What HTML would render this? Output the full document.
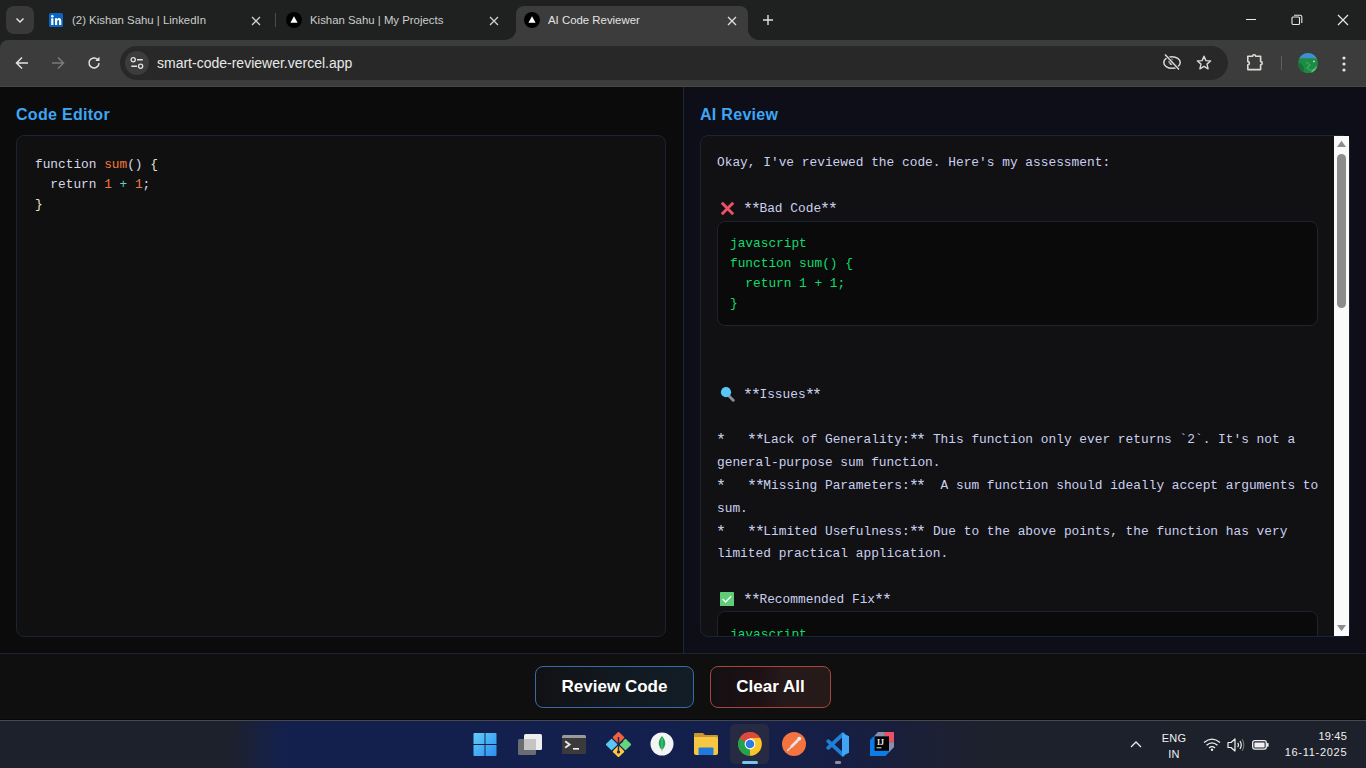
<!DOCTYPE html>
<html><head><meta charset="utf-8">
<style>
*{margin:0;padding:0;box-sizing:border-box}
html,body{width:1366px;height:768px;overflow:hidden;background:#0b0b0b;font-family:"Liberation Sans",sans-serif}
.abs{position:absolute}
#tabstrip{position:absolute;left:0;top:0;width:1366px;height:40px;background:#1f2120}
#tsbg{position:absolute;left:0;top:30px;width:20px;height:20px;background:#1f2120}
#toolbar{position:absolute;left:0;top:40px;width:1366px;height:47px;background:#3c3c3c;border-top-left-radius:8px;border-bottom:1px solid #474747}
.tabtitle{position:absolute;top:14px;font-size:11.4px;color:#e3e3e3;white-space:nowrap}
.mono{font-family:"Liberation Mono",monospace}
#page{position:absolute;left:0;top:87px;width:1366px;height:633px}
#left{position:absolute;left:0;top:0;width:683px;height:566px;background:#0b0b0b}
#right{position:absolute;left:683px;top:0;width:683px;height:566px;background:#0d0e17;border-left:1px solid #1b2838}
.ptitle{position:absolute;top:19.4px;font-size:16px;font-weight:bold;color:#3ea6f5;letter-spacing:0.3px}
#editor{position:absolute;left:16px;top:48px;width:650px;height:502px;background:#101010;border:1px solid #1b2432;border-radius:8px}
#review{position:absolute;left:16px;top:48px;width:650px;height:502px;background:#111114;border:1px solid #1b2432;border-radius:8px;overflow:hidden}
#bottom{position:absolute;left:0;top:566px;width:1366px;height:67px;background:#0f0f0f;border-top:1px solid #1b2432}
.btn{position:absolute;top:12px;height:42px;border-radius:8px;color:#fff;font-weight:bold;font-size:17px;text-align:center;line-height:40px}
#taskbar{position:absolute;left:0;top:720px;width:1366px;height:48px;background:linear-gradient(90deg,#1d212b 0,#1d212b 227px,#13204e 286px,#13204e 640px,#161e44 840px,#1b2034 935px,#1d212b 1000px,#1d212b 100%);border-top:1px solid #46484e}
.cblock{position:absolute;left:16px;width:601px;background:#0a0a0a;border:1px solid #1b2432;border-radius:8px}
.cl{position:absolute;left:12px;white-space:pre;font-family:"Liberation Mono",monospace;font-size:12.8px;line-height:20px;color:#10dc6c}
.line i{font-style:normal;display:inline-block;transform:scale(1.28,1.22) translateY(0.6px)}
.line{position:absolute;left:0;white-space:pre;font-family:"Liberation Mono",monospace;font-size:12.85px;color:#cbd0ee}
</style></head><body>

<div id="tsbg"></div>
<div id="tabstrip">
  <div class="abs" style="left:6px;top:6px;width:28px;height:28px;border-radius:8px;background:#393939"></div>
  <svg class="abs" style="left:14px;top:14px" width="12" height="12" viewBox="0 0 12 12"><path d="M2.5 4.5 L6 8 L9.5 4.5" stroke="#e8e8e8" stroke-width="1.4" fill="none"/></svg>
  <!-- tab 1 -->
  <svg class="abs" style="left:49px;top:13px" width="14" height="14" viewBox="0 0 14 14"><rect width="14" height="14" rx="1.5" fill="#0a66c2"/><rect x="2.2" y="5.3" width="2.2" height="6.7" fill="#fff"/><circle cx="3.3" cy="3.2" r="1.3" fill="#fff"/><path d="M6 12V5.3H8.1V6.3Q8.8 5.1 10.3 5.1Q12.3 5.1 12.3 7.7V12H10.1V8.2Q10.1 6.9 9.2 6.9Q8.2 6.9 8.2 8.3V12Z" fill="#fff"/></svg>
  <div class="tabtitle" style="left:72px;color:#cdcdcd">(2) Kishan Sahu | LinkedIn</div>
  <svg class="abs" style="left:251px;top:16px" width="10" height="10" viewBox="0 0 10 10"><path d="M1 1L9 9M9 1L1 9" stroke="#d0d0d0" stroke-width="1.3"/></svg>
  <div class="abs" style="left:275px;top:13px;width:1px;height:14px;background:#4a4a4a"></div>
  <!-- tab 2 -->
  <svg class="abs" style="left:286px;top:12px" width="16" height="16" viewBox="0 0 16 16"><circle cx="8" cy="8" r="8" fill="#000"/><path d="M8 4.3L11.6 10.8H4.4Z" fill="#fff"/></svg>
  <div class="tabtitle" style="left:310px;color:#cdcdcd">Kishan Sahu | My Projects</div>
  <svg class="abs" style="left:489px;top:16px" width="10" height="10" viewBox="0 0 10 10"><path d="M1 1L9 9M9 1L1 9" stroke="#d0d0d0" stroke-width="1.3"/></svg>
  <!-- active tab -->
  <svg class="abs" style="left:500px;top:6px" width="266" height="35" viewBox="0 0 266 35"><path d="M5 35 V34 A11 11 0 0 0 16 23 V8 A8 8 0 0 1 24 0 H240 A8 8 0 0 1 248 8 V23 A11 11 0 0 0 259 34 V35Z" fill="#3c3c3c"/></svg>
  <svg class="abs" style="left:524px;top:12px" width="16" height="16" viewBox="0 0 16 16"><circle cx="8" cy="8" r="8" fill="#000"/><path d="M8 4.3L11.6 10.8H4.4Z" fill="#fff"/></svg>
  <div class="tabtitle" style="left:548px">AI Code Reviewer</div>
  <svg class="abs" style="left:727px;top:16px" width="10" height="10" viewBox="0 0 10 10"><path d="M1 1L9 9M9 1L1 9" stroke="#e0e0e0" stroke-width="1.3"/></svg>
  <svg class="abs" style="left:762px;top:14px" width="12" height="12" viewBox="0 0 12 12"><path d="M6 1V11M1 6H11" stroke="#e0e0e0" stroke-width="1.4"/></svg>
  <!-- window controls -->
  <div class="abs" style="left:1246px;top:19px;width:10px;height:1px;background:#e8e8e8"></div>
  <svg class="abs" style="left:1291px;top:14px" width="12" height="12" viewBox="0 0 12 12"><rect x="1" y="3" width="7.5" height="7.5" rx="1" stroke="#e8e8e8" fill="none" stroke-width="1.1"/><path d="M3 1.2H9.3Q10.8 1.2 10.8 2.7V9" stroke="#e8e8e8" fill="none" stroke-width="1.1"/></svg>
  <svg class="abs" style="left:1337px;top:14px" width="12" height="12" viewBox="0 0 12 12"><path d="M1 1L11 11M11 1L1 11" stroke="#e8e8e8" stroke-width="1.2"/></svg>
</div>

<div id="toolbar">
  <svg class="abs" style="left:15px;top:16px" width="14" height="14" viewBox="0 0 14 14"><path d="M13 7H2M7 1.5L1.5 7L7 12.5" stroke="#e3e3e3" stroke-width="1.5" fill="none"/></svg>
  <svg class="abs" style="left:51px;top:16px" width="14" height="14" viewBox="0 0 14 14"><path d="M1 7H12M7 1.5L12.5 7L7 12.5" stroke="#7a7a7a" stroke-width="1.5" fill="none"/></svg>
  <svg class="abs" style="left:87px;top:16px" width="14" height="14" viewBox="0 0 14 14"><path d="M12 7A5 5 0 1 1 10.5 3.4" stroke="#e3e3e3" stroke-width="1.5" fill="none"/><path d="M12.5 0.8V5H8.3Z" fill="#e3e3e3"/></svg>
  <div class="abs" style="left:120px;top:6px;width:1108px;height:34px;border-radius:17px;background:#282828"></div>
  <div class="abs" style="left:125px;top:11px;width:24px;height:24px;border-radius:12px;background:#3c3c3c"></div>
  <svg class="abs" style="left:128px;top:14px" width="18" height="18" viewBox="0 0 18 18"><circle cx="5.2" cy="5.7" r="2.1" stroke="#e3e3e3" fill="none" stroke-width="1.3"/><path d="M9 5.7H14.8M3.3 12.2H9" stroke="#e3e3e3" stroke-width="1.5"/><circle cx="12.6" cy="12.2" r="2.1" stroke="#e3e3e3" fill="none" stroke-width="1.3"/></svg>
  <div class="abs" style="left:157px;top:15px;font-size:14px;color:#e8e8e8">smart-code-reviewer.vercel.app</div>
  <svg class="abs" style="left:1162px;top:13.3px" width="20" height="18" viewBox="0 0 20 18"><ellipse cx="10" cy="9.5" rx="8.2" ry="5.8" stroke="#d8d8d8" stroke-width="1.5" fill="none"/><path d="M7 9.5A3 3 0 0 1 10.5 6.6" stroke="#d8d8d8" stroke-width="1.6" fill="none"/><circle cx="9.3" cy="10" r="2" fill="#d8d8d8"/><path d="M3 1.5L17 16.5" stroke="#282828" stroke-width="3"/><path d="M3 1.5L17 16.5" stroke="#d8d8d8" stroke-width="1.5"/></svg>
  <svg class="abs" style="left:1196px;top:15px" width="16" height="16" viewBox="0 0 16 16"><path d="M8 1.2L9.9 5.6L14.6 6L11 9.1L12.1 13.8L8 11.3L3.9 13.8L5 9.1L1.4 6L6.1 5.6Z" stroke="#d8d8d8" stroke-width="1.4" fill="none" stroke-linejoin="round"/></svg>
  <svg class="abs" style="left:1245px;top:13px" width="20" height="19" viewBox="0 0 20 19"><path d="M2.8 3.2H7.6A1.5 1.5 0 0 1 10.6 3.2H15.6V8.6A1.6 1.6 0 0 1 15.6 11.8V16.6H2.8V11.8A1.6 1.6 0 0 0 2.8 8.6Z" stroke="#dcdcd6" stroke-width="1.6" fill="none" stroke-linejoin="round"/></svg>
  <div class="abs" style="left:1280.5px;top:16px;width:1.2px;height:14px;background:#5d606c"></div>
  <svg class="abs" style="left:1298px;top:13px" width="20" height="20" viewBox="0 0 20 20"><defs><clipPath id="av"><circle cx="10" cy="10.1" r="10"/></clipPath></defs><g clip-path="url(#av)"><rect width="20" height="20" fill="#1f8a45"/><rect width="20" height="5.2" fill="#3f8fd6"/><path d="M0 6Q6 4 10 5.5Q15 4 20 6.5V5H0Z" fill="#2a9a50"/><path d="M0 9Q5 11 6 16Q7 20 0 20Z" fill="#167038"/><path d="M8 9L12 12L9 15L14 18" stroke="#2fae5c" stroke-width="1.2" fill="none"/><circle cx="16" cy="8.3" r="0.9" fill="#e8e0ea"/><path d="M14 17Q17 15 19 13V20H13Z" fill="#4cc36e"/></g></svg>
  <svg class="abs" style="left:1341px;top:16px" width="6" height="16" viewBox="0 0 6 16"><circle cx="3" cy="2" r="1.6" fill="#e3e3e3"/><circle cx="3" cy="8" r="1.6" fill="#e3e3e3"/><circle cx="3" cy="14" r="1.6" fill="#e3e3e3"/></svg>
</div>

<div id="page">
  <div id="left">
    <div class="ptitle" style="left:16px">Code Editor</div>
    <div id="editor">
      <div class="mono" style="position:absolute;left:18px;top:19px;font-size:12.8px;line-height:20px;color:#d6d8ea;white-space:pre">function <span style="color:#f2793f">sum</span>() <span style="color:#ece4c8">{</span>
  return <span style="color:#f2793f">1</span> <span style="color:#67cdcc">+</span> <span style="color:#f2793f">1</span>;
<span style="color:#ece4c8">}</span></div>
    </div>
  </div>
  <div id="right">
    <div class="ptitle" style="left:16px">AI Review</div>
    <div id="review">
      <div class="line" style="top:19.3px;left:16px">Okay, I've reviewed the code. Here's my assessment:</div>
      <svg class="abs" style="left:18.5px;top:64.5px" width="15" height="15" viewBox="0 0 15 15"><path d="M1.8 1.8L13.2 13.2M13.2 1.8L1.8 13.2" stroke="#f05068" stroke-width="2.9" stroke-linecap="butt"/></svg>
      <div class="line" style="top:65.0px;left:43px"><i>*</i><i>*</i>Bad Code<i>*</i><i>*</i></div>
      <div class="cblock" style="top:85px;height:105px"><div class="cl" style="top:12.2px">javascript
function sum() {
  return 1 + 1;
}</div></div>
      <svg class="abs" style="left:18px;top:250px" width="16" height="16" viewBox="0 0 16 16"><path d="M9.8 9.8L14.2 14.2" stroke="#8a8d9a" stroke-width="3" stroke-linecap="round"/><circle cx="7" cy="6.2" r="5.1" fill="#58c6f6"/></svg>
      <div class="line" style="top:251.0px;left:43px"><i>*</i><i>*</i>Issues<i>*</i><i>*</i></div>
      <div class="line" style="top:296.2px;left:16px"><i>*</i>   <i>*</i><i>*</i>Lack of Generality:<i>*</i><i>*</i> This function only ever returns `2`. It's not a</div>
      <div class="line" style="top:319.1px;left:16px">general-purpose sum function.</div>
      <div class="line" style="top:342.0px;left:16px"><i>*</i>   <i>*</i><i>*</i>Missing Parameters:<i>*</i><i>*</i>  A sum function should ideally accept arguments to</div>
      <div class="line" style="top:364.8px;left:16px">sum.</div>
      <div class="line" style="top:387.6px;left:16px"><i>*</i>   <i>*</i><i>*</i>Limited Usefulness:<i>*</i><i>*</i> Due to the above points, the function has very</div>
      <div class="line" style="top:410.4px;left:16px">limited practical application.</div>
      <svg class="abs" style="left:19px;top:456px" width="14" height="14" viewBox="0 0 14 14"><rect x="0" y="0" width="14" height="14" rx="0.6" fill="#60cc78"/><path d="M2.6 7L5.6 10L11.2 4.2" stroke="#fff" stroke-width="1.3" fill="none"/></svg>
      <div class="line" style="top:456.0px;left:43px"><i>*</i><i>*</i>Recommended Fix<i>*</i><i>*</i></div>
      <div class="cblock" style="top:475.4px;height:60px"><div class="cl" style="top:12.2px">javascript</div></div>
    </div>
    <div class="abs" style="left:650px;top:48.5px;width:15px;height:500.5px;background:#fafafa"></div>
    <svg class="abs" style="left:652px;top:53px" width="11" height="8" viewBox="0 0 11 8"><path d="M5.5 0.8L10 7H1Z" fill="#8c8c8c"/></svg>
    <div class="abs" style="left:653px;top:67px;width:9px;height:154px;border-radius:4.5px;background:#8c8c8c"></div>
    <svg class="abs" style="left:652px;top:537px" width="11" height="8" viewBox="0 0 11 8"><path d="M1 1H10L5.5 7.2Z" fill="#8c8c8c"/></svg>
  </div>
  <div id="bottom">
    <div class="btn" style="left:535px;width:159px;border:1px solid #3a6aa6;background:linear-gradient(90deg,#111114 0%,#121a21 55%,#121d25 100%)">Review Code</div>
    <div class="btn" style="left:710px;width:121px;border:1px solid #a3463f;background:linear-gradient(90deg,#131013 0%,#1e1114 40%,#25191a 60%,#261a19 100%)">Clear All</div>
  </div>
</div>

<div class="abs" style="left:0;top:719px;width:1366px;height:1px;background:#070707"></div>
<div id="taskbar">
  <!-- start -->
  <svg class="abs" style="left:473px;top:12px" width="24" height="23" viewBox="0 0 24 24"><defs><linearGradient id="ws" x1="0" y1="0" x2="1" y2="1"><stop offset="0" stop-color="#62cdf7"/><stop offset="1" stop-color="#2a8ff0"/></linearGradient></defs><path d="M0 1Q0 0 1 0H11.5V11.5H0ZM12.5 0H23Q24 0 24 1V11.5H12.5ZM0 12.5H11.5V24H1Q0 24 0 23ZM12.5 12.5H24V23Q24 24 23 24H12.5Z" fill="url(#ws)"/></svg>
  <!-- task view -->
  <svg class="abs" style="left:518px;top:12px" width="25" height="23" viewBox="0 0 25 23"><rect x="0" y="6" width="18" height="16" rx="1.5" fill="#6a6c72"/><rect x="6" y="1" width="18" height="16" rx="1.5" fill="#eeeeee"/><rect x="6" y="6" width="12" height="11" fill="#c4c4c2"/></svg>
  <!-- terminal -->
  <svg class="abs" style="left:562px;top:14px" width="24" height="19" viewBox="0 0 24 19"><rect x="0" y="0" width="24" height="19" rx="1.5" fill="#3a3a3a"/><path d="M1.5 0H22.5Q24 0 24 1.5V3H0V1.5Q0 0 1.5 0Z" fill="#9a9a9a"/><path d="M3.2 6.3L7.5 9.5L3.2 12.7" stroke="#e6e6e6" stroke-width="2" fill="none"/><rect x="11" y="13" width="6" height="1.6" fill="#f2f2f2"/></svg>
  <!-- git diamond -->
  <svg class="abs" style="left:606px;top:11px" width="25" height="25" viewBox="0 0 25 25"><g transform="rotate(45 12.5 12.5)"><rect x="3.3" y="3.3" width="8.6" height="8.6" rx="1" fill="#f0613c"/><rect x="13.1" y="3.3" width="8.6" height="8.6" rx="1" fill="#66d47a"/><rect x="3.3" y="13.1" width="8.6" height="8.6" rx="1" fill="#5cc6f4"/><rect x="13.1" y="13.1" width="8.6" height="8.6" rx="1" fill="#fcc63e"/></g><path d="M12.5 5V20M12.5 12.5L17 9" stroke="#1b2a55" stroke-width="1.5"/><circle cx="12.5" cy="20" r="1.6" fill="#1b2a55"/></svg>
  <!-- mongodb -->
  <svg class="abs" style="left:650px;top:11px" width="24" height="24" viewBox="0 0 24 24"><circle cx="12" cy="12" r="11.5" fill="#f4f4f4"/><path d="M12 4Q16 8.5 15.2 12.5Q14.5 16 12.3 17.5L12 20L11.7 17.5Q9.5 16 8.8 12.5Q8 8.5 12 4Z" fill="#13aa52"/><path d="M12 6V19" stroke="#b8c4bb" stroke-width="0.6"/></svg>
  <!-- files -->
  <svg class="abs" style="left:694px;top:12px" width="24" height="22" viewBox="0 0 24 22"><path d="M0 1Q0 0 1 0H9L11 2H23Q24 2 24 3V6H0Z" fill="#c9972e"/><path d="M0 4H22Q24 4 24 6V20Q24 22 22 22H2Q0 22 0 20Z" fill="#f7c744"/><rect x="4.5" y="14.5" width="15" height="7.5" rx="1" fill="#1f7ad8"/></svg>
  <!-- chrome (active) -->
  <div class="abs" style="left:730px;top:3px;width:39px;height:40px;border-radius:5px;background:#262b42"></div>
  <svg class="abs" style="left:738px;top:11px" width="24" height="24" viewBox="0 0 24 24"><circle cx="12" cy="12" r="11.8" fill="#dd4a3b"/><path d="M12 12L1.6 6.2A11.8 11.8 0 0 0 12 23.8Z" fill="#26a24a"/><path d="M12 12L12 23.8A11.8 11.8 0 0 0 22.2 6.1L12 6.1Z" fill="#f8c626"/><path d="M12 12L1.6 6.2 A11.8 11.8 0 0 1 22.2 6.1L12 6.1Z" fill="#dd4a3b"/><circle cx="12" cy="12" r="5.4" fill="#fff"/><circle cx="12" cy="12" r="4.3" fill="#2d7be5"/></svg>
  <div class="abs" style="left:742px;top:40px;width:16px;height:3px;border-radius:1.5px;background:#76c6f2"></div>
  <!-- postman -->
  <svg class="abs" style="left:782px;top:11px" width="24" height="24" viewBox="0 0 24 24"><circle cx="12" cy="12" r="12" fill="#f4733f"/><path d="M5.5 18.6L10.5 14" stroke="#e8e8e8" stroke-width="1.3" stroke-linecap="round"/><path d="M9.8 14.2L15.6 8.6" stroke="#e4e4e4" stroke-width="2.8" stroke-linecap="round"/><circle cx="17.3" cy="6.6" r="1.9" fill="#f2f2f2"/></svg>
  <!-- vscode -->
  <svg class="abs" style="left:825px;top:11px" width="25" height="25" viewBox="0 0 25 25"><path d="M18 2.2L3.2 15.8M18 22.8L3.2 9.2" stroke="#1f7fd6" stroke-width="3.8" stroke-linecap="round"/><path d="M17 0.8L24 4.2V20.8L17 24.2Z" fill="#3fa5f4"/></svg>
  <div class="abs" style="left:835px;top:40px;width:6px;height:2.5px;border-radius:1.2px;background:#8a8f9e"></div>
  <!-- intellij -->
  <svg class="abs" style="left:870px;top:11px" width="24" height="24" viewBox="0 0 24 24"><path d="M0 8L8 0H24V15L15.5 24H0Z" fill="#0b7de8"/><path d="M8 0H14.5V4.5H4.5Z" fill="#8b90a8"/><path d="M14.5 0H24V10.5H19V4.5H14.5Z" fill="#ec5068"/><path d="M19 10.5H24V15L19 20Z" fill="#8b90a8"/><rect x="4.6" y="4.4" width="14.4" height="14.4" fill="#000"/><text x="7" y="12.8" font-family="Liberation Serif" font-size="8" font-weight="bold" fill="#f0f0f0">IJ</text><rect x="6.5" y="15.3" width="5" height="1" fill="#e6e6e6"/></svg>
  <!-- tray -->
  <svg class="abs" style="left:1130px;top:18.5px" width="12" height="8" viewBox="0 0 12 8"><path d="M1 7L6 2L11 7" stroke="#eaeaea" stroke-width="1.3" fill="none"/></svg>
  <div class="abs" style="left:1159px;top:9px;width:30px;text-align:center;font-size:11px;line-height:16px;color:#f0f0f0;letter-spacing:0.2px">ENG<br>IN</div>
  <svg class="abs" style="left:1203px;top:17px" width="18" height="13" viewBox="0 0 18 13"><path d="M1 4.6Q9 -2.2 17 4.6M3.5 7.3Q9 2.6 14.5 7.3M6 9.9Q9 7.4 12 9.9" stroke="#f0f0f0" stroke-width="1.3" fill="none"/><circle cx="9" cy="11.8" r="1.2" fill="#f0f0f0"/></svg>
  <svg class="abs" style="left:1227px;top:17px" width="18" height="14" viewBox="0 0 18 14"><path d="M1 4.5H4L8 1V13L4 9.5H1Z" stroke="#f0f0f0" stroke-width="1.2" fill="none" stroke-linejoin="round"/><path d="M10.8 4.8Q12.2 7 10.8 9.2M13 3Q15.5 7 13 11" stroke="#f0f0f0" stroke-width="1.2" fill="none"/><path d="M15.2 1.2Q18.5 7 15.2 12.8" stroke="#777" stroke-width="1.1" fill="none"/></svg>
  <svg class="abs" style="left:1252px;top:18.5px" width="17" height="11" viewBox="0 0 17 11"><rect x="0.7" y="0.7" width="13.6" height="8.4" rx="2" stroke="#f0f0f0" stroke-width="1.3" fill="none"/><rect x="2.4" y="2.4" width="10.2" height="5" rx="0.5" fill="#f0f0f0"/><rect x="15" y="3" width="1.6" height="3.8" rx="0.6" fill="#f0f0f0"/></svg>
  <div class="abs" style="left:1260px;top:6.5px;width:87px;text-align:right;font-size:11px;line-height:16px;color:#f0f0f0;letter-spacing:0.2px">19:45</div><div class="abs" style="left:1250px;top:23.2px;width:97.3px;text-align:right;font-size:11px;line-height:16px;color:#f0f0f0;letter-spacing:0.72px">16-11-2025</div>
</div>
</body></html>
